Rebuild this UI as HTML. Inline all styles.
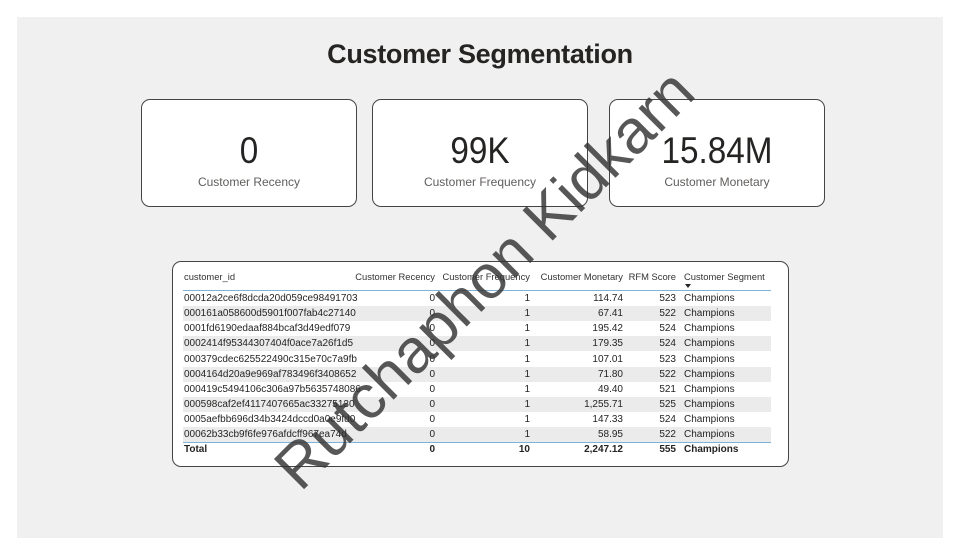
<!DOCTYPE html>
<html><head><meta charset="utf-8"><style>
*{margin:0;padding:0;box-sizing:border-box}
body{width:960px;height:555px;background:#fff;font-family:"Liberation Sans",sans-serif;position:relative;overflow:hidden;color:#252423}
.bg{position:absolute;left:17px;top:17px;width:926px;height:521px;background:#f0f0f0}
.title{position:absolute;left:0;width:960px;top:39px;text-align:center;font-size:27px;font-weight:bold;color:#252423;letter-spacing:-0.3px}
.card{position:absolute;top:99px;height:108px;background:#fff;border:1px solid #444;border-radius:9px;text-align:center}
.card .v{position:absolute;top:30px;width:100%;font-size:37px;color:#252423;transform:scaleX(0.9)}
.card .l{position:absolute;top:75px;width:100%;font-size:12px;color:#605e5c}
.tbl{position:absolute;left:172px;top:261px;width:617px;height:206px;background:#fff;border:1px solid #444;border-radius:9px}
.t{position:absolute;font-size:10px;white-space:nowrap;line-height:15px}
.h{font-size:9.4px;color:#333}
.row{position:absolute;left:10px;width:588px;height:15px}
.r{text-align:right}
</style></head><body>
<div class="bg"></div>
<div class="title">Customer Segmentation</div>
<div class="card" style="left:141px;width:216px"><div class="v">0</div><div class="l">Customer Recency</div></div>
<div class="card" style="left:372px;width:216px"><div class="v">99K</div><div class="l">Customer Frequency</div></div>
<div class="card" style="left:609px;width:216px"><div class="v">15.84M</div><div class="l">Customer Monetary</div></div>
<div class="tbl" id="tb"></div>
<svg style="position:absolute;left:0;top:0" width="960" height="555"><text x="485" y="300" text-anchor="middle" font-family="Liberation Sans, sans-serif" font-size="62" fill="rgba(50,50,50,0.82)" transform="rotate(-45 485 280)">Rutchaphon Kidkarn</text></svg>
<script>
var d=[["00012a2ce6f8dcda20d059ce98491703","114.74","523"],["000161a058600d5901f007fab4c27140","67.41","522"],["0001fd6190edaaf884bcaf3d49edf079","195.42","524"],["0002414f95344307404f0ace7a26f1d5","179.35","524"],["000379cdec625522490c315e70c7a9fb","107.01","523"],["0004164d20a9e969af783496f3408652","71.80","522"],["000419c5494106c306a97b5635748086","49.40","521"],["000598caf2ef4117407665ac33275130","1,255.71","525"],["0005aefbb696d34b3424dccd0a0e9fd0","147.33","524"],["00062b33cb9f6fe976afdcff967ea74d","58.95","522"]];
var h='';
h+='<div class="t h" style="left:11px;top:7px">customer_id</div>';
h+='<div class="t h r" style="right:353px;top:7px">Customer Recency</div>';
h+='<div class="t h r" style="right:258px;top:7px">Customer Frequency</div>';
h+='<div class="t h r" style="right:165px;top:7px">Customer Monetary</div>';
h+='<div class="t h r" style="right:112px;top:7px">RFM Score</div>';
h+='<div class="t h" style="left:511px;top:7px">Customer Segment</div>';
h+='<div style="position:absolute;left:512px;top:22px;border-left:3px solid transparent;border-right:3px solid transparent;border-top:4px solid #252423"></div>';
h+='<div style="position:absolute;left:10px;top:28px;width:588px;height:1px;background:#7fb2d6"></div>';
for(var i=0;i<10;i++){var y=29+i*15.15;
h+='<div class="row" style="top:'+y+'px;background:'+(i%2?'#ebebeb':'#fff')+'"></div>';
h+='<div class="t" style="left:11px;top:'+y+'px">'+d[i][0]+'</div>';
h+='<div class="t r" style="right:353px;top:'+y+'px">0</div>';
h+='<div class="t r" style="right:258px;top:'+y+'px">1</div>';
h+='<div class="t r" style="right:165px;top:'+y+'px">'+d[i][1]+'</div>';
h+='<div class="t r" style="right:112px;top:'+y+'px">'+d[i][2]+'</div>';
h+='<div class="t" style="left:511px;top:'+y+'px">Champions</div>';}
h+='<div style="position:absolute;left:10px;top:180px;width:588px;height:1px;background:#7fb2d6"></div>';
var y=180,b='font-weight:bold;';
h+='<div class="t" style="'+b+'left:11px;top:'+y+'px">Total</div>';
h+='<div class="t r" style="'+b+'right:353px;top:'+y+'px">0</div>';
h+='<div class="t r" style="'+b+'right:258px;top:'+y+'px">10</div>';
h+='<div class="t r" style="'+b+'right:165px;top:'+y+'px">2,247.12</div>';
h+='<div class="t r" style="'+b+'right:112px;top:'+y+'px">555</div>';
h+='<div class="t" style="'+b+'left:511px;top:'+y+'px">Champions</div>';
document.getElementById('tb').innerHTML=h;
</script>
</body></html>
